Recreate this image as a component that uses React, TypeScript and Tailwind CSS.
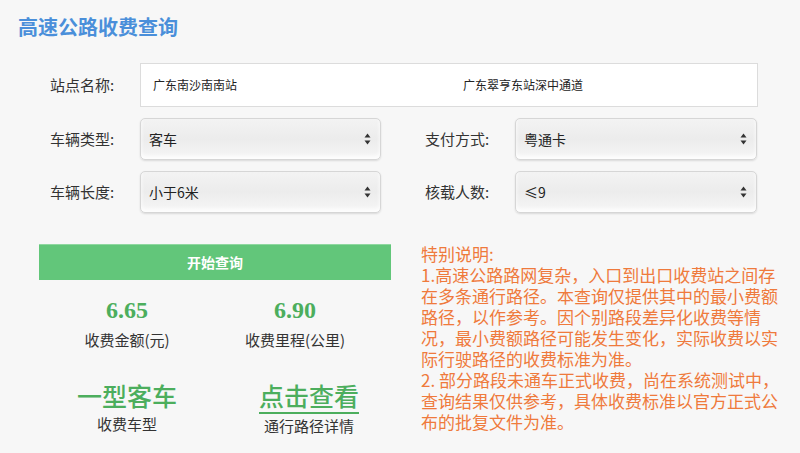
const cjk = { fontFamily: '"Noto Sans CJK SC", "Noto Sans", sans-serif' };
const serif = { fontFamily: '"Liberation Serif", "Noto Sans CJK SC", serif' };

const SelectBox = ({ value, width }: { value: string; width: string }) => (
  <div
    className={`${width} h-[42px] flex items-center justify-between pl-[8px] pr-[9px] rounded-[5px] border border-[#d6d6d6] bg-gradient-to-b from-[#f3f3f3] via-[#ececec] to-[#f6f6f6] shadow-[inset_0_-3px_4px_rgba(255,255,255,0.9),0_1px_2px_rgba(0,0,0,0.12)]`}
  >
    <span className="text-[14px] text-[#222]" style={cjk}>{value}</span>
    <svg width="7" height="12" viewBox="0 0 7 12">
      <path d="M3.5 0.5 L6.5 4.5 L0.5 4.5 Z" fill="#333" />
      <path d="M3.5 11.5 L6.5 7.5 L0.5 7.5 Z" fill="#333" />
    </svg>
  </div>
);

const Label = ({ text }: { text: string }) => (
  <div className="w-[90px] text-[15px] text-[#333]" style={cjk}>{text}</div>
);

const notes = [
  '特别说明:',
  '1.高速公路路网复杂，入口到出口收费站之间存',
  '在多条通行路径。本查询仅提供其中的最小费额',
  '路径，以作参考。因个别路段差异化收费等情',
  '况，最小费额路径可能发生变化，实际收费以实',
  '际行驶路径的收费标准为准。',
  '2. 部分路段未通车正式收费，尚在系统测试中，',
  '查询结果仅供参考，具体收费标准以官方正式公',
  '布的批复文件为准。',
];

export default function App() {
  return (
    <div className="w-[800px] h-[453px] bg-[#f7f7f7] overflow-hidden" style={cjk}>
      <h1 className="pl-[18px] pt-[12px] text-[20px] leading-[30px] font-semibold text-[#4a8fda]">
        高速公路收费查询
      </h1>

      {/* form */}
      <div className="pl-[50px] pt-[21px] flex flex-col gap-[11px]">
        <div className="flex items-center">
          <Label text="站点名称:" />
          <div className="w-[618px] h-[44px] flex items-center bg-white border border-[#dcdcdc] text-[12px] text-[#222]">
            <span className="w-[322px] pl-[12px]">广东南沙南南站</span>
            <span>广东翠亨东站深中通道</span>
          </div>
        </div>
        <div className="flex items-center">
          <Label text="车辆类型:" />
          <SelectBox value="客车" width="w-[241px]" />
          <div className="w-[44px]" />
          <Label text="支付方式:" />
          <SelectBox value="粤通卡" width="w-[242px]" />
        </div>
        <div className="flex items-center">
          <Label text="车辆长度:" />
          <SelectBox value="小于6米" width="w-[241px]" />
          <div className="w-[44px]" />
          <Label text="核载人数:" />
          <SelectBox value="≤9" width="w-[242px]" />
        </div>
      </div>

      {/* results + notes */}
      <div className="flex pl-[39px] pt-[31px]">
        <div className="w-[352px]">
          <div className="h-[36px] bg-[#62c67a] border-t border-[#8fd8a0] flex items-center justify-center text-white text-[14px] font-bold">
            开始查询
          </div>
          <div className="grid grid-cols-2 pt-[15px]">
            <div className="flex flex-col items-center">
              <div className="text-[24px] leading-[30px] font-bold text-[#4cae5d]" style={serif}>6.65</div>
              <div className="text-[15px] leading-[26px] text-[#333] mt-[2px]">收费金额(元)</div>
            </div>
            <div className="flex flex-col items-center pr-[16px]">
              <div className="text-[24px] leading-[30px] font-bold text-[#4cae5d]" style={serif}>6.90</div>
              <div className="text-[15px] leading-[26px] text-[#333] mt-[2px]">收费里程(公里)</div>
            </div>
            <div className="flex flex-col items-center pt-[25px]">
              <div className="text-[25px] leading-[34px] font-medium text-[#4cae5d]">一型客车</div>
              <div className="text-[15px] leading-[22px] text-[#333] mt-[1px]">收费车型</div>
            </div>
            <div className="flex flex-col items-center pt-[25px] pl-[12px]">
              <div className="text-[25px] leading-[34px] font-medium text-[#4cae5d] border-b-2 border-[#4cae5d]">点击查看</div>
              <div className="text-[15px] leading-[22px] text-[#333] mt-[1px]">通行路径详情</div>
            </div>
          </div>
        </div>
        <div className="pl-[30px] -mt-[1px] text-[17px] leading-[21px] text-[#ef7a3c]">
          {notes.map((line) => (
            <div key={line} className="whitespace-nowrap">{line}</div>
          ))}
        </div>
      </div>
    </div>
  );
}
